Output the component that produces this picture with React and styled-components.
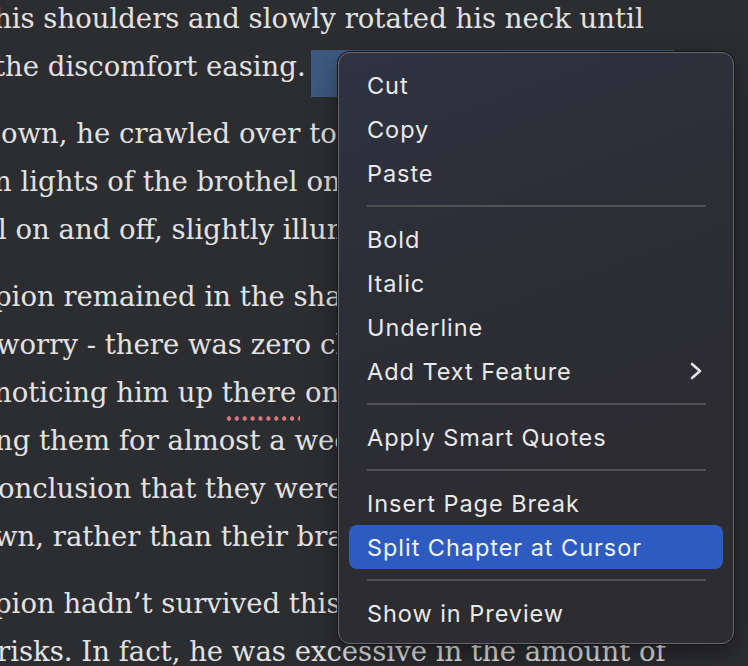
import React from "react";
import styled, { createGlobalStyle } from "styled-components";

const GlobalStyle = createGlobalStyle`
  html, body {
    margin: 0;
    padding: 0;
    background: #2c2d31;
  }
`;

const Page = styled.div`
  position: relative;
  width: 748px;
  height: 666px;
  overflow: hidden;
  background: #2c2d31;
`;

const Manuscript = styled.div`
  margin-top: -6px;
  font-family: "DejaVu Serif", "Liberation Serif", serif;
  font-size: 27.5px;
  color: #e2e2e2;
`;

const Paragraph = styled.div`
  margin-bottom: 19px;
`;

const Line = styled.div`
  height: 48px;
  line-height: 48px;
  white-space: nowrap;
  margin-left: ${(p) => p.$cut || 0}px;
`;

const SelectedLine = styled(Line)`
  display: flex;
  width: ${(p) => p.$width}px;
`;

const Selection = styled.span`
  flex: 1;
  height: 47px;
  margin-top: 8px;
  margin-left: 5px;
  background: #3e5a80;
`;

const Misspelled = styled.span`
  position: relative;

  &::after {
    content: "";
    position: absolute;
    left: 3px;
    right: -4px;
    bottom: -13px;
    height: 5px;
    background-image: radial-gradient(circle, #d77575 2px, transparent 2.5px);
    background-size: 7.9px 5px;
    background-repeat: repeat-x;
  }
`;

const Menu = styled.div`
  position: absolute;
  left: 338px;
  top: 52px;
  width: 396px;
  box-sizing: border-box;
  padding: 10px 10px 8px;
  border-radius: 12px;
  border: 1px solid #67676c;
  box-shadow: 0 0 0 1px #141416, 0 10px 30px rgba(0, 0, 0, 0.4);
  background: linear-gradient(160deg, #2f3342 0%, #2c2e36 35%, #2c2c31 70%, #2d2d31 100%);
  font-family: "Inter", "Noto Sans", sans-serif;
  font-size: 23.5px;
  letter-spacing: 0.95px;
  color: #e9e9ea;
`;

const Item = styled.div`
  display: flex;
  align-items: center;
  justify-content: space-between;
  height: 44px;
  padding: 0 20px 0 18px;
  border-radius: 8px;
  background: ${(p) => (p.$active ? "#2e5bbf" : "transparent")};
  color: ${(p) => (p.$active ? "#f2f4fb" : "#e9e9ea")};
`;

const Separator = styled.div`
  height: 22px;
  display: flex;
  align-items: center;
  padding: 0 17px 0 18px;

  &::before {
    content: "";
    flex: 1;
    height: 2px;
    background: #505055;
  }
`;

const Chevron = () => (
  <svg width="14" height="20" viewBox="0 0 14 20">
    <polyline
      points="3,3 11,10 3,17"
      fill="none"
      stroke="#e4e4e6"
      strokeWidth="2.6"
      strokeLinecap="round"
      strokeLinejoin="round"
    />
  </svg>
);

const menu = [
  ["Cut", "Copy", "Paste"],
  ["Bold", "Italic", "Underline", "Add Text Feature"],
  ["Apply Smart Quotes"],
  ["Insert Page Break", "Split Chapter at Cursor"],
  ["Show in Preview"],
];

export default function App() {
  return (
    <>
      <GlobalStyle />
      <Page>
        <Manuscript>
          <Paragraph>
            <Line $cut={-6}>his shoulders and slowly rotated his neck until</Line>
            <SelectedLine $cut={-6} $width={680}>
              <span>the discomfort easing.</span>
              <Selection />
            </SelectedLine>
          </Paragraph>
          <Paragraph>
            <Line $cut={1}>own, he crawled over to the edge</Line>
            <Line $cut={-6}>n lights of the brothel on the corner</Line>
            <Line $cut={-2}>l on and off, slightly illuminating</Line>
          </Paragraph>
          <Paragraph>
            <Line $cut={-6}>pion remained in the shadows</Line>
            <Line $cut={-4}>worry - there was zero chance</Line>
            <Line $cut={-6}>
              noticing him up <Misspelled>there</Misspelled> on the roof
            </Line>
            <Line $cut={-5}>ng them for almost a week</Line>
            <Line $cut={-2}>onclusion that they were</Line>
            <Line $cut={-6}>wn, rather than their brains</Line>
          </Paragraph>
          <Paragraph>
            <Line $cut={-6}>pion hadn’t survived this long</Line>
            <Line $cut={-3}>risks. In fact, he was excessive in the amount of</Line>
          </Paragraph>
        </Manuscript>

        <Menu>
          {menu.map((group, gi) => (
            <React.Fragment key={gi}>
              {gi > 0 && <Separator />}
              {group.map((label) => (
                <Item key={label} $active={label === "Split Chapter at Cursor"}>
                  <span>{label}</span>
                  {label === "Add Text Feature" && <Chevron />}
                </Item>
              ))}
            </React.Fragment>
          ))}
        </Menu>
      </Page>
    </>
  );
}
